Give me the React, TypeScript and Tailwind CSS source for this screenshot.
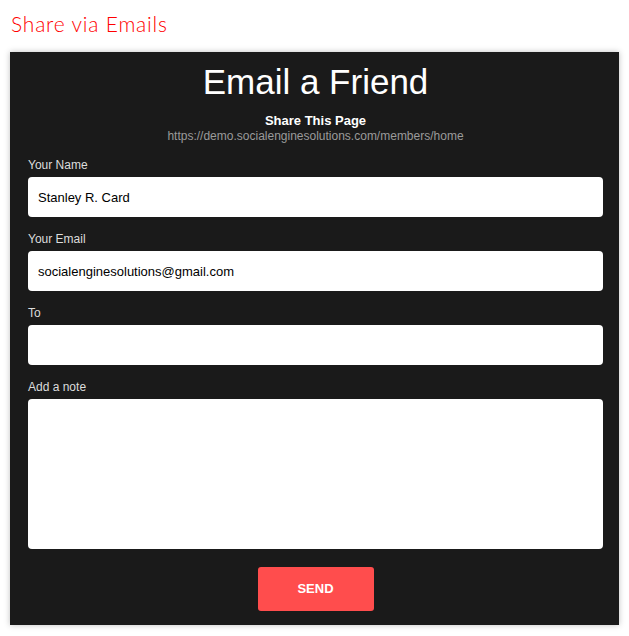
import React from "react";

export default function App() {
  const label = "block text-[12px] leading-[18px] text-[#dddddd] mb-[3px]";
  const input =
    "block w-full h-[40px] rounded-[4px] bg-white px-[10px] text-[13px] text-black outline-none";
  return (
    <div className="w-[629px] h-[636px] bg-white" style={{ fontFamily: '"Liberation Sans", Arial, sans-serif' }}>
      <div className="pl-[11px] pt-[11px] h-[52px]">
        <h1 className="text-[21px] leading-[26px] text-[#ff0000] font-light tracking-[0.8px]" style={{ fontFamily: 'Lato, "Noto Sans", sans-serif' }}>
          Share via Emails
        </h1>
      </div>
      <div className="ml-[10px] w-[609px] bg-[#1a1a1a] shadow-[0_0_6px_rgba(0,0,0,0.25)] pl-[18px] pr-[16px] pt-[8px] pb-[14px]">
        <div className="text-center">
          <div className="text-[35px] leading-[44px] text-white">Email a Friend</div>
          <div className="mt-[9px] text-[13px] leading-[15px] font-bold text-white">Share This Page</div>
          <div className="text-[12px] leading-[16px] text-[#9a9a9a]">https://demo.socialenginesolutions.com/members/home</div>
        </div>
        <div className="mt-[12px]">
          <label className={label}>Your Name</label>
          <input className={input} defaultValue="Stanley R. Card" />
        </div>
        <div className="mt-[13px]">
          <label className={label}>Your Email</label>
          <input className={input} defaultValue="socialenginesolutions@gmail.com" />
        </div>
        <div className="mt-[13px]">
          <label className={label}>To</label>
          <input className={input} defaultValue="" />
        </div>
        <div className="mt-[13px]">
          <label className={label}>Add a note</label>
          <textarea className="block w-full h-[150px] rounded-[4px] bg-white p-[10px] text-[13px] text-black outline-none resize-none" />
        </div>
        <div className="mt-[18px] flex justify-center">
          <button className="w-[116px] h-[44px] rounded-[3px] bg-[#ff4d4d] text-white text-[13px] font-bold">
            SEND
          </button>
        </div>
      </div>
    </div>
  );
}
